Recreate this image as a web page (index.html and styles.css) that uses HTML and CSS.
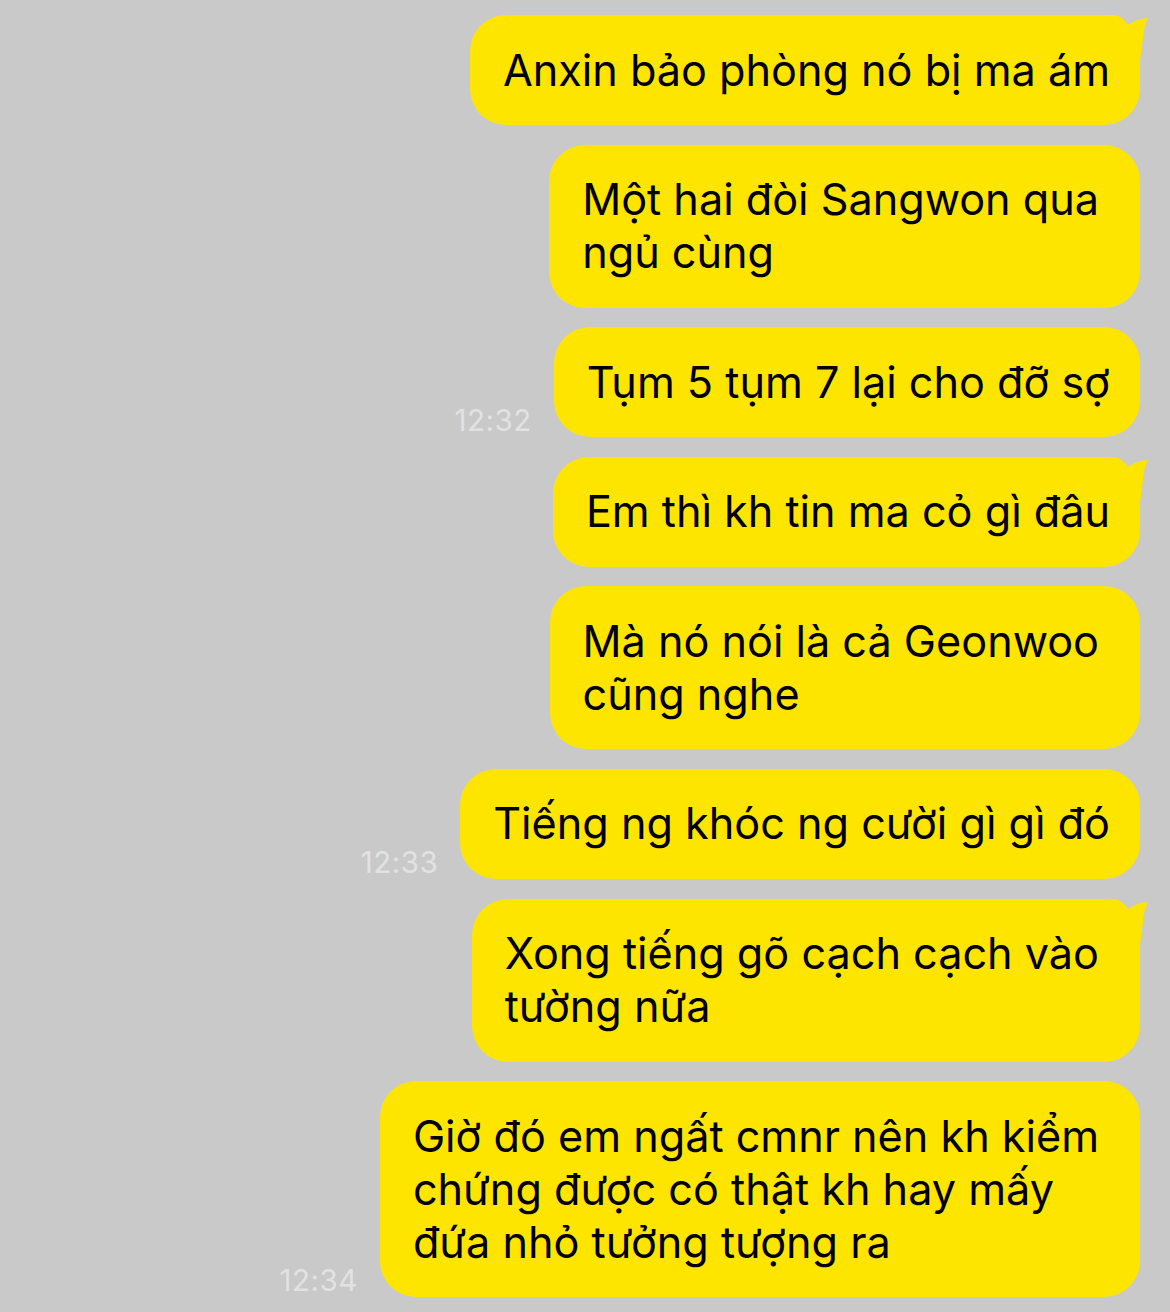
FILE: index.html
```html
<!DOCTYPE html>
<html lang="vi">
<head>
<meta charset="utf-8">
<link rel="stylesheet" href="styles.css">
</head>
<body>
<main class="chat">
  <div class="row">
    <div class="bubble tail">Anxin bảo phòng nó bị ma ám<svg class="horn" viewBox="0 0 50 45" width="50" height="45"><path d="M0 0 L14 0 Q22 1 28 10 Q36 4 48 3 Q44 10 43 22 Q42 32 40 45 L0 45 Z"/></svg></div>
  </div>
  <div class="row">
    <div class="bubble multi">Một hai đòi Sangwon qua<br>ngủ cùng</div>
  </div>
  <div class="row">
    <span class="time">12:32</span>
    <div class="bubble">Tụm 5 tụm 7 lại cho đỡ sợ</div>
  </div>
  <div class="row">
    <div class="bubble tail">Em thì kh tin ma cỏ gì đâu<svg class="horn" viewBox="0 0 50 45" width="50" height="45"><path d="M0 0 L14 0 Q22 1 28 10 Q36 4 48 3 Q44 10 43 22 Q42 32 40 45 L0 45 Z"/></svg></div>
  </div>
  <div class="row">
    <div class="bubble multi">Mà nó nói là cả Geonwoo<br>cũng nghe</div>
  </div>
  <div class="row">
    <span class="time">12:33</span>
    <div class="bubble">Tiếng ng khóc ng cười gì gì đó</div>
  </div>
  <div class="row">
    <div class="bubble multi tail">Xong tiếng gõ cạch cạch vào<br>tường nữa<svg class="horn" viewBox="0 0 50 45" width="50" height="45"><path d="M0 0 L14 0 Q22 1 28 10 Q36 4 48 3 Q44 10 43 22 Q42 32 40 45 L0 45 Z"/></svg></div>
  </div>
  <div class="row">
    <span class="time">12:34</span>
    <div class="bubble multi">Giờ đó em ngất cmnr nên kh kiểm<br>chứng được có thật kh hay mấy<br>đứa nhỏ tưởng tượng ra</div>
  </div>
</main>
</body>
</html>
```

FILE: styles.css
```css
html, body {
  margin: 0;
  padding: 0;
  background: #c9c9c9;
}
body {
  width: 1170px;
  height: 1312px;
  overflow: hidden;
  font-family: Inter, "Noto Sans", sans-serif;
}
.chat {
  display: flex;
  flex-direction: column;
  align-items: flex-end;
  gap: 19.6px;
  padding: 15px 30px 0 0;
}
.row {
  display: flex;
  align-items: flex-end;
  gap: 22px;
}
.time {
  color: #e2e2e2;
  font-size: 29.5px;
  line-height: 34px;
  margin-bottom: 0;
  letter-spacing: 0.5px;
}
.bubble {
  position: relative;
  background: #fee500;
  color: #000;
  font-size: 43.2px;
  line-height: 53px;
  padding: 28.5px 30px 28.5px 33px;
  border-radius: 36px;
  white-space: nowrap;
}
.bubble.multi {
  padding-right: 41px;
}
.horn {
  position: absolute;
  top: 0;
  right: -10px;
  fill: #fee500;
}
```
